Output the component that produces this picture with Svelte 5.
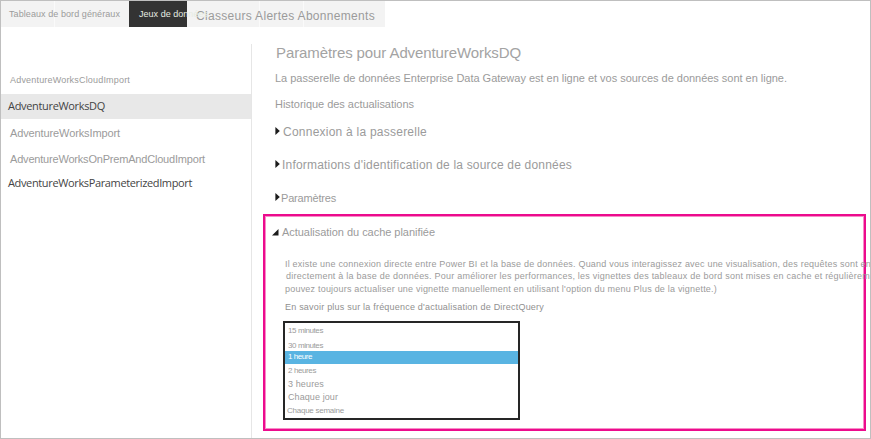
<script>
  const tabs = [
    { text: 'Tableaux de bord généraux', kind: 'general', width: 111 },
    { text: 'Jeux de données', kind: 'active', width: 69 },
    { text: 'Classeurs Alertes Abonnements', kind: 'rest', width: 179 }
  ];
  const datasets = [
    { text: 'AdventureWorksCloudImport', kind: 'cloud', width: 120 },
    { text: 'AdventureWorksDQ', kind: 'selected', width: 97 },
    { text: 'AdventureWorksImport', kind: 'import', width: 110 },
    { text: 'AdventureWorksOnPremAndCloudImport', kind: 'onprem', width: 195 },
    { text: 'AdventureWorksParameterizedImport', kind: 'param', width: 184 }
  ];
  const sections = [
    { text: 'Connexion à la passerelle', kind: 'gateway', width: 144 },
    { text: "Informations d'identification de la source de données", kind: 'credentials', width: 290 },
    { text: 'Paramètres', kind: 'params', width: 55 }
  ];
  const options = [
    { text: '15 minutes', kind: 'o15', width: 35 },
    { text: '30 minutes', kind: 'o30', width: 35 },
    { text: '1 heure', kind: 'o1', width: 24 },
    { text: '2 heures', kind: 'o2', width: 28 },
    { text: '3 heures', kind: 'o3', width: 36 },
    { text: 'Chaque jour', kind: 'day', width: 50 },
    { text: 'Chaque semaine', kind: 'week', width: 57 }
  ];

  // Spread the tracking so that a label takes the given width.
  function fit(node, width) {
    const natural = node.getBoundingClientRect().width;
    node.style.letterSpacing = `${(width - natural) / node.textContent.length}px`;
  }
</script>

<div class="window">
  <nav class="tabs">
    {#each tabs as t}
      <div class="tab {t.kind}"><span use:fit={t.width}>{t.text}</span></div>
    {/each}
  </nav>
  <div class="body">
    <aside>
      {#each datasets as d}
        <div class="item {d.kind}"><span use:fit={d.width}>{d.text}</span></div>
      {/each}
    </aside>
    <main>
      <h1><span use:fit={245}>Paramètres pour AdventureWorksDQ</span></h1>
      <p class="status"><span use:fit={512}>La passerelle de données Enterprise Data Gateway est en ligne et vos sources de données sont en ligne.</span></p>
      <p class="history"><span use:fit={139}>Historique des actualisations</span></p>
      {#each sections as s}
        <div class="section {s.kind}">
          <svg width="5" height="8" viewBox="0 0 5 8"><path d="M0.4 0L4.8 4L0.4 8Z" fill="#1c1c1c" /></svg>
          <span use:fit={s.width}>{s.text}</span>
        </div>
      {/each}
      <section class="cache">
        <div class="heading">
          <svg width="7" height="7" viewBox="0 0 7 7"><path d="M6.5 0V6.5H0Z" fill="#1c1c1c" /></svg>
          <span use:fit={153}>Actualisation du cache planifiée</span>
        </div>
        <div class="copy">
          <p class="l1"><span use:fit={586}>Il existe une connexion directe entre Power BI et la base de données. Quand vous interagissez avec une visualisation, des requêtes sont en</span></p>
          <p class="l2"><span use:fit={584}>directement à la base de données. Pour améliorer les performances, les vignettes des tableaux de bord sont mises en cache et régulièrem</span></p>
          <p class="l3"><span use:fit={432}>pouvez toujours actualiser une vignette manuellement en utilisant l'option du menu Plus de la vignette.)</span></p>
          <p class="more"><span use:fit={259}>En savoir plus sur la fréquence d'actualisation de DirectQuery</span></p>
        </div>
        <div class="list">
          {#each options as o}
            <div class="option {o.kind}"><span use:fit={o.width}>{o.text}</span></div>
          {/each}
        </div>
      </section>
    </main>
  </div>
</div>

<style>
  .window {
    box-sizing: border-box;
    width: 871px;
    height: 439px;
    border: 1px solid #bfbfbf;
    background: #fff;
    overflow: hidden;
    color: #9b9b9b;
    font-family: "Liberation Sans", Arial, sans-serif;
    font-size: 11px;
    display: flex;
    flex-direction: column;
  }
  span { white-space: nowrap; flex: none; }
  p, h1 { margin: 0; font-weight: 400; line-height: 20px; height: 20px; display: flex; }
  .tabs { display: flex; height: 26px; flex: none; }
  .tab { display: flex; box-sizing: border-box; line-height: 20px; background: #f3f3f3; white-space: nowrap; }
  .general { width: 128px; padding: 3px 0 0 8px; font-size: 9px; background: linear-gradient(#fafafa, #fafafa) 53px 0 / 1px 100% no-repeat #f3f3f3; }
  .active { width: 58px; padding: 3px 0 0 10px; font-size: 9px; color: #e6ece2; background: #333; position: relative; z-index: 1; }
  .rest { width: 198px; padding: 5px 0 0 9px; font-size: 12px; background: linear-gradient(#fafafa, #fafafa) 72px 0 / 1px 100% no-repeat, linear-gradient(#fafafa, #fafafa) 116px 0 / 1px 100% no-repeat #f3f3f3; }
  .body { display: flex; flex: 1; min-height: 0; }
  aside { box-sizing: border-box; width: 251px; margin-top: 17px; padding-top: 26px; border-right: 1px solid #e6e6e6; flex: none; }
  .item { height: 20px; line-height: 20px; padding-left: 9px; display: flex; }
  .cloud { font-size: 9px; height: 24px; }
  .selected { height: 25px; line-height: 24px; background: #e8e8e8; padding-left: 7px; color: #444; font-family: "Open Sans", sans-serif; font-size: 11px; }
  .import { margin-top: 4px; }
  .onprem { margin-top: 6px; }
  .param { margin-top: 4px; padding-left: 7px; color: #444; font-family: "Open Sans", sans-serif; }
  main { flex: 1; min-width: 0; padding-top: 16px; }
  h1 { font-size: 15px; padding-left: 24px; color: #a3a3a3; }
  .status { margin-top: 5px; padding-left: 23px; }
  .history { margin-top: 6px; padding-left: 23px; }
  .section { display: flex; align-items: center; height: 20px; line-height: 20px; margin-top: 13px; padding-left: 23px; gap: 1px; }
  .section svg { flex: none; position: relative; top: -1px; }
  .gateway { margin-top: 8px; font-size: 12px; gap: 3px; }
  .credentials { font-size: 12px; gap: 2px; }
  .cache { box-sizing: border-box; width: 603px; height: 217px; margin: 6px 0 0 11px; border: 2px solid #ec0b8d; box-shadow: inset 0 0 0 1px #f78cc8; padding-top: 6px; }
  .heading { display: flex; align-items: center; height: 20px; line-height: 20px; padding-left: 7px; gap: 3px; }
  .copy { padding: 12px 0 0 20px; font-size: 9px; white-space: nowrap; }
  .l2 { margin-top: -8px; padding-left: 1px; }
  .l3 { margin-top: -7px; }
  .more { margin-top: -2px; color: #909090; }
  .list { box-sizing: border-box; width: 237px; height: 99px; margin: 4px 0 0 18px; border: 2px solid #262626; padding-top: 1px; }
  .option { display: flex; height: 14px; line-height: 14px; padding-left: 3px; font-size: 8px; }
  .o15 { height: 13px; }
  .o30 { line-height: 17px; }
  .o1 { height: 13px; line-height: 12px; background: #59b4e2; color: #fff; }
  .o2 { height: 13px; }
  .o3, .day { height: 13px; line-height: 14px; font-size: 9px; }
  .week { padding-left: 2px; line-height: 16px; }
</style>
